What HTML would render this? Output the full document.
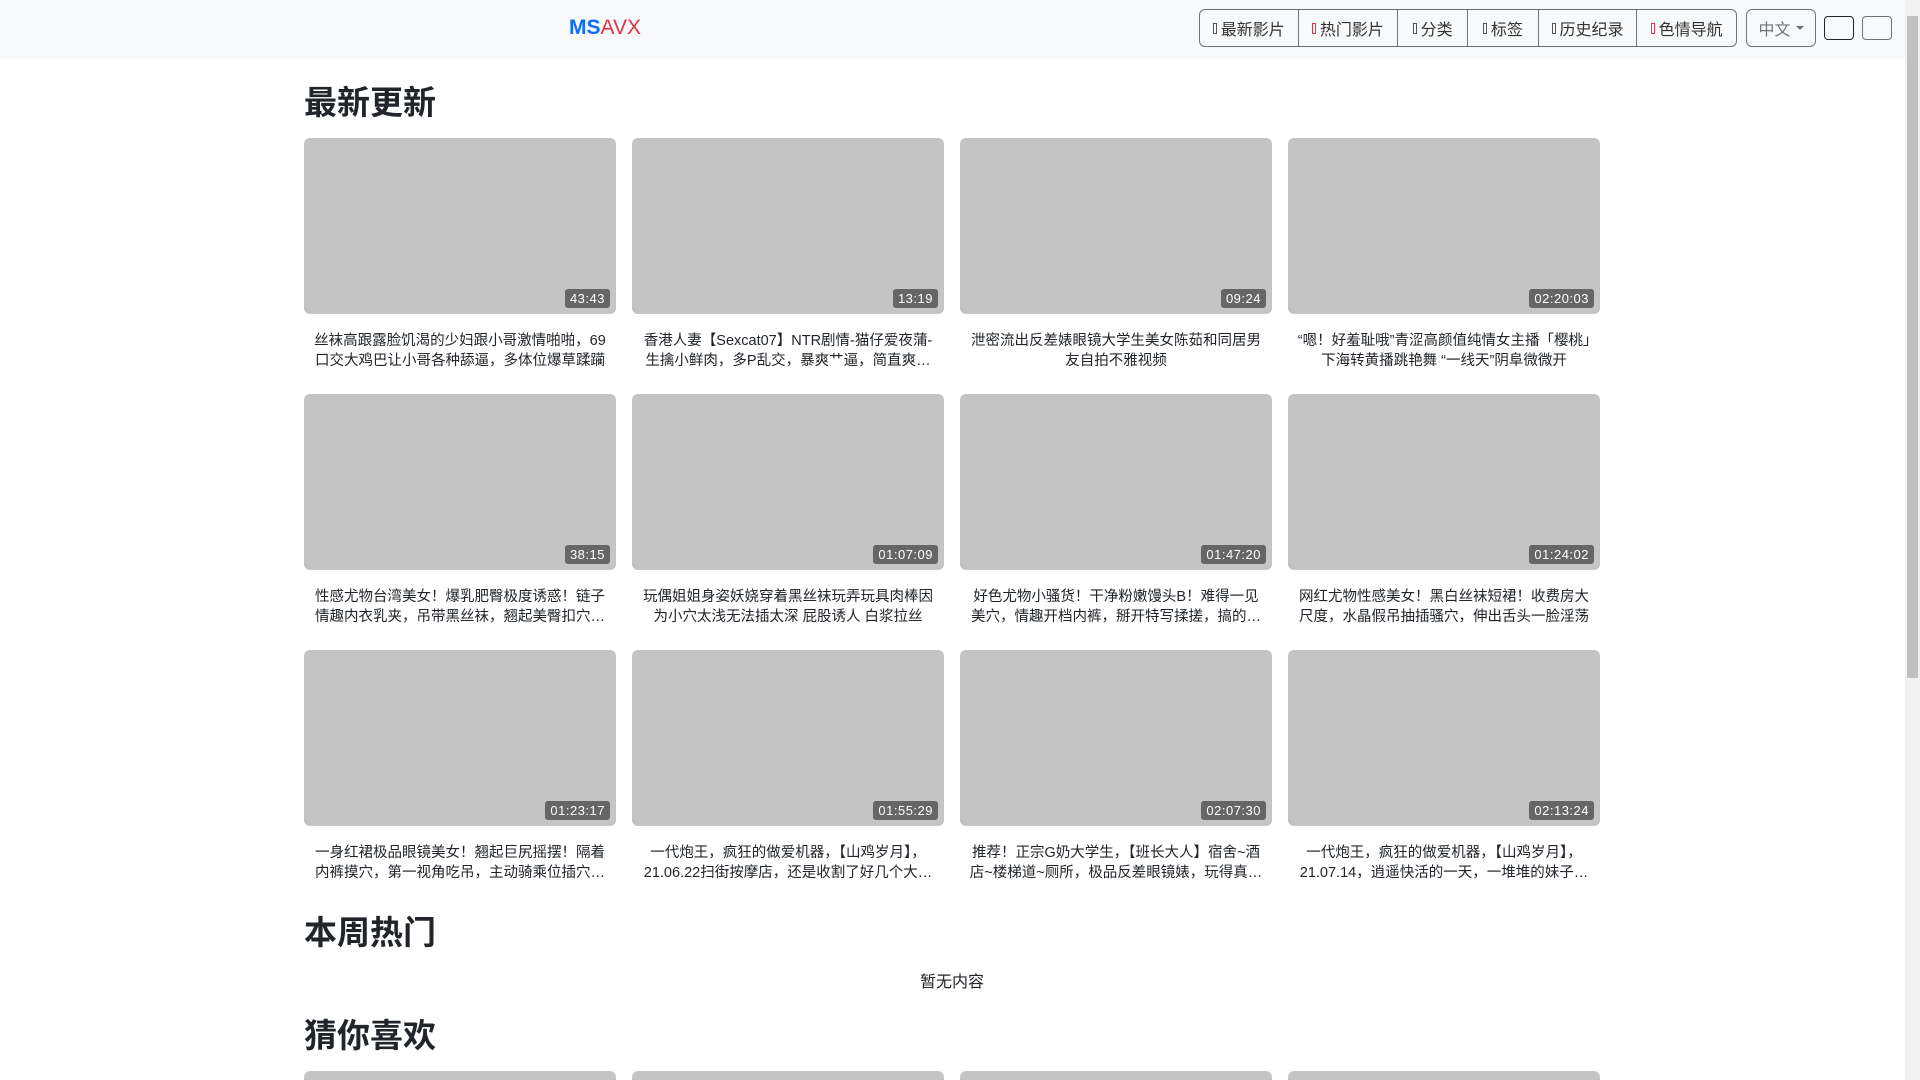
<!DOCTYPE html>
<html style="height:1080px;overflow:hidden"><head><meta charset="utf-8"><style>
*{box-sizing:border-box;margin:0;padding:0}
body{width:1920px;height:1080px;overflow:hidden;background:#fff;font-family:"Liberation Sans","Noto Sans CJK SC",sans-serif;color:#212529;position:relative}
.nav{position:absolute;left:0;top:0;width:1905px;height:56px;background:#f8f9fa;box-shadow:0 2px 4px rgba(0,0,0,.06)}
.logo{position:absolute;left:569px;top:16px;font-size:21px;font-weight:bold;letter-spacing:0}
.logo b{color:#0d6efd}.logo span{color:#dc3545;font-weight:normal}
.grp{position:absolute;left:1199px;top:9px;height:38px;width:538px;border:1px solid #6c757d;border-radius:6px;display:flex;font-size:16px;color:#333}
.grp div{display:flex;align-items:center;justify-content:center;border-right:1px solid #6c757d;height:100%}
.grp div:last-child{border-right:none}
.ic{display:inline-block;width:4px;height:11px;border:1px solid #555;margin-right:4px}
.ic.r{border-color:#dc3545}
.sel{position:absolute;left:1746px;top:9px;width:70px;height:38px;border:1px solid #6c757d;border-radius:6px;color:#6c757d;font-size:16px;display:flex;align-items:center;justify-content:center}
.sel:after{content:"";border:4px solid transparent;border-top-color:#6c757d;margin:4px 0 0 5px}
.sb{position:absolute;top:16px;width:30px;height:24px;border:1px solid #212529;border-radius:4px}
.scroll{position:absolute;right:0;top:0;width:15px;height:1080px;background:#f1f1f1}
.thumbbar{position:absolute;right:2px;top:16px;width:11px;height:662px;background:#c1c1c1}
h2{position:absolute;left:304px;font-size:33px;font-weight:bold;color:#212529;font-family:"Liberation Sans","Noto Sans CJK SC",sans-serif}
.card{position:absolute;width:312px}
.th{height:176px;background:#c4c4c4;border-radius:6px;position:relative}
.d{position:absolute;right:6px;bottom:6px;background:#666;color:#fff;font-size:13px;padding:2px 5px;border-radius:3px;letter-spacing:.5px}
.t{margin-top:17px;text-align:center;font-size:14.5px;line-height:20px;padding:0 8px;height:40px;overflow:hidden;display:-webkit-box;-webkit-line-clamp:2;-webkit-box-orient:vertical;color:#212529}
</style></head><body>
<div class="nav">
<div class="logo"><b>MS</b><span>AVX</span></div>
<div class="grp">
<div style="width:99px"><i class="ic"></i>最新影片</div>
<div style="width:100px"><i class="ic r"></i>热门影片</div>
<div style="width:70px"><i class="ic"></i>分类</div>
<div style="width:71px"><i class="ic"></i>标签</div>
<div style="width:99px"><i class="ic"></i>历史纪录</div>
<div style="width:99px"><i class="ic r"></i>色情导航</div>
</div>
<div class="sel">中文</div>
<div class="sb" style="left:1824px"></div>
<div class="sb" style="left:1862px;border-color:#6c757d"></div>
</div>
<div class="scroll"><div class="thumbbar"></div></div>
<h2 style="top:76px">最新更新</h2>
<div class="card" style="left:304px;top:138px"><div class="th"><span class="d">43:43</span></div><div class="t">丝袜高跟露脸饥渴的少妇跟小哥激情啪啪，69口交大鸡巴让小哥各种舔逼，多体位爆草蹂躏</div></div>
<div class="card" style="left:632px;top:138px"><div class="th"><span class="d">13:19</span></div><div class="t">香港人妻【Sexcat07】NTR剧情-猫仔爱夜蒲-生擒小鲜肉，多P乱交，暴爽艹逼，简直爽翻天</div></div>
<div class="card" style="left:960px;top:138px"><div class="th"><span class="d">09:24</span></div><div class="t">泄密流出反差婊眼镜大学生美女陈茹和同居男友自拍不雅视频</div></div>
<div class="card" style="left:1288px;top:138px"><div class="th"><span class="d">02:20:03</span></div><div class="t">“嗯！好羞耻哦”青涩高颜值纯情女主播「樱桃」下海转黄播跳艳舞 “一线天”阴阜微微开</div></div>
<div class="card" style="left:304px;top:394px"><div class="th"><span class="d">38:15</span></div><div class="t">性感尤物台湾美女！爆乳肥臀极度诱惑！链子情趣内衣乳夹，吊带黑丝袜，翘起美臀扣穴自慰</div></div>
<div class="card" style="left:632px;top:394px"><div class="th"><span class="d">01:07:09</span></div><div class="t">玩偶姐姐身姿妖娆穿着黑丝袜玩弄玩具肉棒因为小穴太浅无法插太深 屁股诱人 白浆拉丝</div></div>
<div class="card" style="left:960px;top:394px"><div class="th"><span class="d">01:47:20</span></div><div class="t">好色尤物小骚货！干净粉嫩馒头B！难得一见美穴，情趣开档内裤，掰开特写揉搓，搞的骚穴湿哒哒</div></div>
<div class="card" style="left:1288px;top:394px"><div class="th"><span class="d">01:24:02</span></div><div class="t">网红尤物性感美女！黑白丝袜短裙！收费房大尺度，水晶假吊抽插骚穴，伸出舌头一脸淫荡</div></div>
<div class="card" style="left:304px;top:650px"><div class="th"><span class="d">01:23:17</span></div><div class="t">一身红裙极品眼镜美女！翘起巨尻摇摆！隔着内裤摸穴，第一视角吃吊，主动骑乘位插穴抽送</div></div>
<div class="card" style="left:632px;top:650px"><div class="th"><span class="d">01:55:29</span></div><div class="t">一代炮王，疯狂的做爱机器，【山鸡岁月】，21.06.22扫街按摩店，还是收割了好几个大奶妹子</div></div>
<div class="card" style="left:960px;top:650px"><div class="th"><span class="d">02:07:30</span></div><div class="t">推荐！正宗G奶大学生，【班长大人】宿舍~酒店~楼梯道~厕所，极品反差眼镜婊，玩得真花样</div></div>
<div class="card" style="left:1288px;top:650px"><div class="th"><span class="d">02:13:24</span></div><div class="t">一代炮王，疯狂的做爱机器，【山鸡岁月】，21.07.14，逍遥快活的一天，一堆堆的妹子任挑</div></div>
<h2 style="top:906px">本周热门</h2>
<div style="position:absolute;left:304px;width:1296px;top:968px;text-align:center;font-size:16px">暂无内容</div>
<h2 style="top:1009px">猜你喜欢</h2>
<div class="card" style="left:304px;top:1071px"><div class="th" style="height:9px;border-radius:6px 6px 0 0"></div></div>
<div class="card" style="left:632px;top:1071px"><div class="th" style="height:9px;border-radius:6px 6px 0 0"></div></div>
<div class="card" style="left:960px;top:1071px"><div class="th" style="height:9px;border-radius:6px 6px 0 0"></div></div>
<div class="card" style="left:1288px;top:1071px"><div class="th" style="height:9px;border-radius:6px 6px 0 0"></div></div>
</body></html>
